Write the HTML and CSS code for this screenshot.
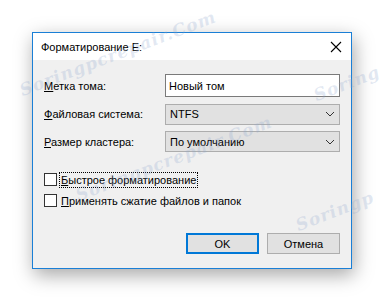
FILE: index.html
```html
<!DOCTYPE html>
<html lang="ru">
<head>
<meta charset="utf-8">
<title>Форматирование E:</title>
<link rel="stylesheet" href="styles.css">
</head>
<body>
<div class="dialog">
  <div class="titlebar">
    <span class="title">Форматирование E:</span>
    <svg class="close" width="12" height="12" viewBox="0 0 12 12"><path d="M1 1 L11 11 M11 1 L1 11" stroke="#000" stroke-width="1.1" fill="none"/></svg>
  </div>
  <div class="content">
    <div class="form">
      <label class="label"><u>М</u>етка тома:</label>
      <div class="input">Новый том</div>
      <label class="label"><u>Ф</u>айловая система:</label>
      <div class="combo"><span>NTFS</span><svg class="chev" width="10" height="6" viewBox="0 0 10 6"><path d="M1 1 L5 5 L9 1" stroke="#333" stroke-width="1" fill="none"/></svg></div>
      <label class="label"><u>Р</u>азмер кластера:</label>
      <div class="combo"><span>По умолчанию</span><svg class="chev" width="10" height="6" viewBox="0 0 10 6"><path d="M1 1 L5 5 L9 1" stroke="#333" stroke-width="1" fill="none"/></svg></div>
    </div>
    <div class="checks">
      <div class="check"><span class="box"></span><span class="ctext focus"><u>Б</u>ыстрое форматирование</span></div>
      <div class="check"><span class="box"></span><span class="ctext"><u>П</u>рименять сжатие файлов и папок</span></div>
    </div>
    <div class="buttons">
      <div class="btn default">OK</div>
      <div class="btn">Отмена</div>
    </div>
  </div>
</div>
<div class="wm wm1">Soringpcrepair.Com</div>
<div class="wm wm2">Soring</div>
<div class="wm wm3">Soringpcrepair.Com</div>
<div class="wm wm4">Soringp</div>
</body>
</html>
```
FILE: styles.css
```css
html, body {
  margin: 0;
  padding: 0;
  background: #fff;
}
body {
  width: 384px;
  height: 301px;
  overflow: hidden;
  position: relative;
  font-family: "Liberation Sans", Arial, sans-serif;
  font-size: 11px;
  color: #000;
}
.dialog {
  box-sizing: border-box;
  width: 320px;
  height: 237px;
  margin: 32px 0 0 32px;
  border: 1px solid #1a7fd6;
  background: #f0f0f0;
  box-shadow: 2px 6px 18px rgba(0, 0, 0, 0.35);
  display: flex;
  flex-direction: column;
}
.titlebar {
  height: 27px;
  background: #fff;
  display: flex;
  align-items: center;
  justify-content: space-between;
  padding: 0 9px 0 8px;
}
.title {
  margin-top: 1px;
}
.close {
  display: block;
  margin-top: 1px;
}
.content {
  padding: 14px 11px 0 11px;
  display: flex;
  flex-direction: column;
}
.form {
  display: grid;
  grid-template-columns: 121px 175px;
  grid-template-rows: 23px 21px 21px;
  row-gap: 6.5px;
  align-items: center;
}
u {
  text-decoration: underline;
  text-underline-offset: 1px;
}
.input {
  box-sizing: border-box;
  height: 23px;
  border: 1px solid #7a7a7a;
  background: #fff;
  padding-left: 3px;
  display: flex;
  align-items: center;
}
.combo {
  box-sizing: border-box;
  height: 21px;
  border: 1px solid #adadad;
  background: #e1e1e1;
  padding: 0 4px 0 4px;
  display: flex;
  align-items: center;
  justify-content: space-between;
}
.chev {
  display: block;
}
.checks {
  margin-top: 21px;
  display: flex;
  flex-direction: column;
  gap: 8px;
}
.check {
  display: flex;
  align-items: center;
  height: 13px;
}
.box {
  box-sizing: border-box;
  width: 13px;
  height: 13px;
  border: 1px solid #333;
  background: #fff;
}
.ctext {
  margin-left: 3px;
  padding: 0 1px;
  line-height: 14px;
}
.focus {
  outline: 1px dotted #000;
}
.buttons {
  margin-top: 26px;
  display: flex;
  justify-content: flex-end;
  gap: 8px;
}
.btn {
  box-sizing: border-box;
  width: 73px;
  height: 21px;
  border: 1px solid #adadad;
  background: #e1e1e1;
  display: flex;
  align-items: center;
  justify-content: center;
}
.btn.default {
  border: 2px solid #0078d7;
}
.wm {
  position: absolute;
  font-family: "DejaVu Serif", serif;
  font-style: italic;
  font-weight: bold;
  font-size: 17px;
  letter-spacing: 1px;
  color: rgba(140, 165, 205, 0.25);
  transform: rotate(-21deg);
  transform-origin: left bottom;
  white-space: nowrap;
  pointer-events: none;
}
.wm1 { left: 24px; top: 80px; }
.wm2 { left: 318px; top: 85px; }
.wm3 { left: 80px; top: 185px; }
.wm4 { left: 300px; top: 215px; }
```
